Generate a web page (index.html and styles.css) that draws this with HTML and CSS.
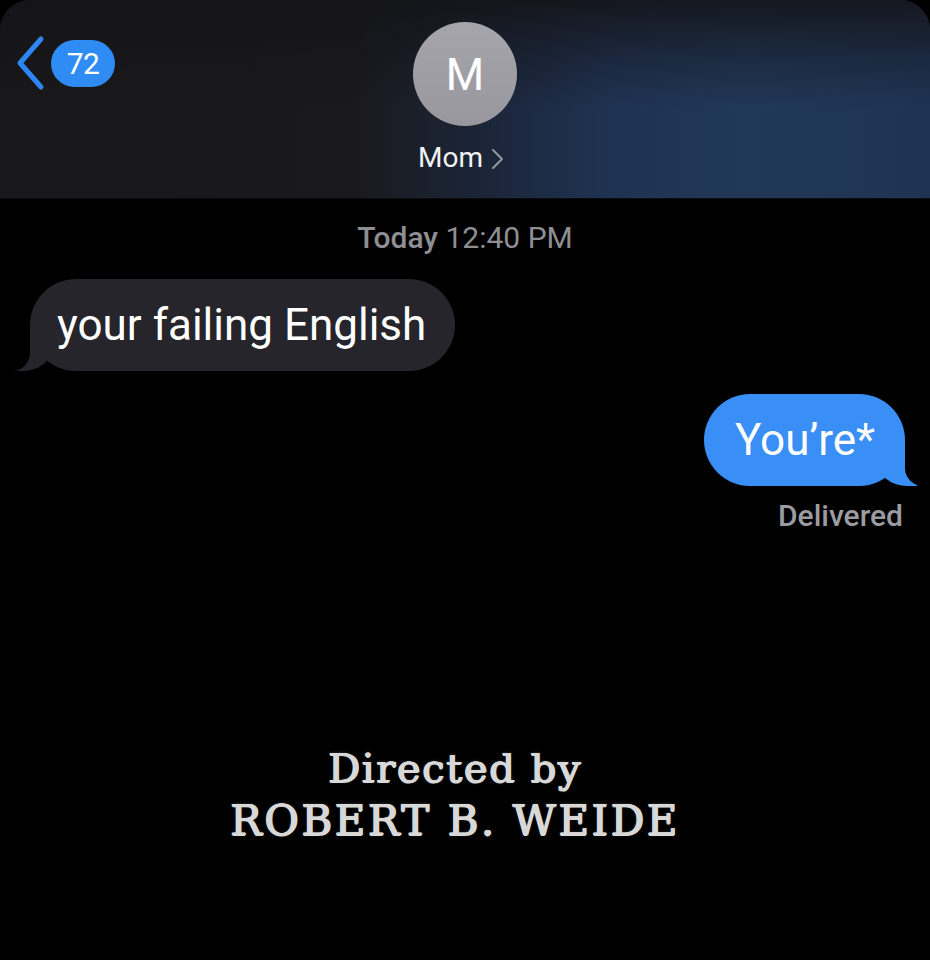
FILE: index.html
```
<!DOCTYPE html>
<html lang="en">
<head>
<meta charset="utf-8">
<title>Mom</title>
<link rel="stylesheet" href="styles.css">
</head>
<body>
<div class="screen">
  <header class="nav">
    <div class="nav-left">
      <svg class="back-chevron" width="32" height="56" viewBox="0 0 32 56" aria-hidden="true">
        <path d="M27 4 L6 28 L27 52" fill="none" stroke="#2d86f3" stroke-width="5" stroke-linecap="round" stroke-linejoin="round"/>
      </svg>
      <span class="badge">72</span>
    </div>
    <div class="nav-center">
      <div class="avatar">M</div>
      <div class="contact-name">Mom <svg class="name-chevron" width="14" height="22" viewBox="0 0 14 22" aria-hidden="true"><path d="M3 2 L12 11 L3 20" fill="none" stroke="#8f96a3" stroke-width="2" stroke-linecap="round" stroke-linejoin="round"/></svg></div>
    </div>
    <div class="nav-right"></div>
  </header>

  <main class="thread">
    <div class="timestamp"><span class="ts-day">Today</span> 12:40 PM</div>
    <div class="row row-in">
      <div class="bubble bubble-in">your failing English</div>
    </div>
    <div class="row row-out">
      <div class="bubble bubble-out">You’re*</div>
    </div>
    <div class="status">Delivered</div>

    <div class="credits">
      <div class="credit-line credit-small">Directed by</div>
      <div class="credit-line credit-big">ROBERT B. WEIDE</div>
    </div>
  </main>
</div>
</body>
</html>
```
FILE: styles.css
```
* { box-sizing: border-box; }
html, body {
  margin: 0;
  padding: 0;
  background: #000;
}
body {
  width: 930px;
  height: 960px;
  overflow: hidden;
  font-family: Roboto, "Liberation Sans", sans-serif;
  color: #fff;
}
.screen {
  width: 930px;
  height: 960px;
  background: #000;
}

/* header */
.nav {
  height: 199px;
  border-radius: 30px 30px 0 0;
  background:
    linear-gradient(180deg, rgba(20,20,24,0.9) 0%, rgba(20,20,24,0.35) 30%, rgba(20,20,24,0) 55%),
    linear-gradient(90deg, #18181a 0%, #1a1a1d 38%, #1b2538 52%, #1f3353 66%, #213859 80%, #1f3455 100%);
  display: grid;
  grid-template-columns: 1fr auto 1fr;
  border-bottom: 1px solid #0c0c0e;
}
.nav-left {
  display: flex;
  align-items: center;
  align-self: start;
  gap: 5px;
  padding: 35px 0 0 14px;
}
.back-chevron { display: block; }
.badge {
  display: flex;
  align-items: center;
  justify-content: center;
  width: 64px;
  height: 47px;
  border-radius: 24px;
  background: #2f8cf5;
  color: #fff;
  font-size: 30px;
  letter-spacing: -0.5px;
}
.nav-center {
  display: flex;
  flex-direction: column;
  align-items: center;
  padding-top: 22px;
}
.avatar {
  width: 104px;
  height: 104px;
  border-radius: 50%;
  background: linear-gradient(180deg, #a5a5ab 0%, #98979e 100%);
  color: #fff;
  font-size: 44px;
  display: flex;
  align-items: center;
  justify-content: center;
  padding-top: 2px;
}
.contact-name {
  margin-top: 15px;
  font-size: 28px;
  line-height: 34px;
  color: #f2f2f4;
  display: flex;
  align-items: center;
  gap: 7px;
  padding-right: 8px;
}
.name-chevron { display: block; margin-top: 2px; }

/* thread */
.thread {
  display: flex;
  flex-direction: column;
}
.timestamp {
  margin-top: 21px;
  text-align: center;
  font-size: 30px;
  line-height: 36px;
  color: #8e8e93;
}
.ts-day { font-weight: 500; }

.row { display: flex; }
.row-in { padding-left: 30px; margin-top: 23px; }
.row-out { justify-content: flex-end; padding-right: 25px; margin-top: 23px; }

.bubble {
  position: relative;
  font-size: 44px;
  line-height: 52px;
  padding: 20px 29px 20px 27px;
  border-radius: 46px;
  color: #fff;
}
.bubble-in { background: #26252b; }
.bubble-out { background: #3a8ff6; padding: 20px 30px 20px 31px; }

/* tails */
.bubble-in::before,
.bubble-in::after,
.bubble-out::before,
.bubble-out::after {
  content: "";
  position: absolute;
  bottom: 0;
  height: 44px;
}
.bubble-in::before {
  left: -17px;
  width: 40px;
  background: #26252b;
  border-bottom-right-radius: 30px 26px;
}
.bubble-in::after {
  left: -48px;
  width: 48px;
  background: #000;
  border-bottom-right-radius: 18px;
}
.bubble-out::before {
  right: -12px;
  width: 40px;
  background: #3a8ff6;
  border-bottom-left-radius: 30px 26px;
}
.bubble-out::after {
  right: -48px;
  width: 48px;
  background: #000;
  border-bottom-left-radius: 18px;
}

.status {
  margin-top: 12px;
  text-align: right;
  padding-right: 27px;
  font-size: 30px;
  line-height: 36px;
  font-weight: 500;
  color: #9b9ba0;
}

/* credits */
.credits {
  margin-top: 211px;
  display: flex;
  flex-direction: column;
  align-items: center;
  padding-right: 20px;
  font-family: "DejaVu Serif", "Liberation Serif", serif;
  font-weight: normal;
  color: #d8d8d8;
  text-shadow: 0.9px 0 0 #d8d8d8, -0.6px 0 0 #d8d8d8, 0 0.6px 0 #d8d8d8, 0 -0.3px 0 #d8d8d8, 0 0 3px rgba(200,200,200,0.35);
}
.credit-line { white-space: nowrap; }
.credit-small {
  font-size: 40px;
  line-height: 46px;
  letter-spacing: 1.6px;
}
.credit-big {
  margin-top: 5px;
  font-size: 42px;
  line-height: 50px;
  letter-spacing: 2.5px;
}
```
